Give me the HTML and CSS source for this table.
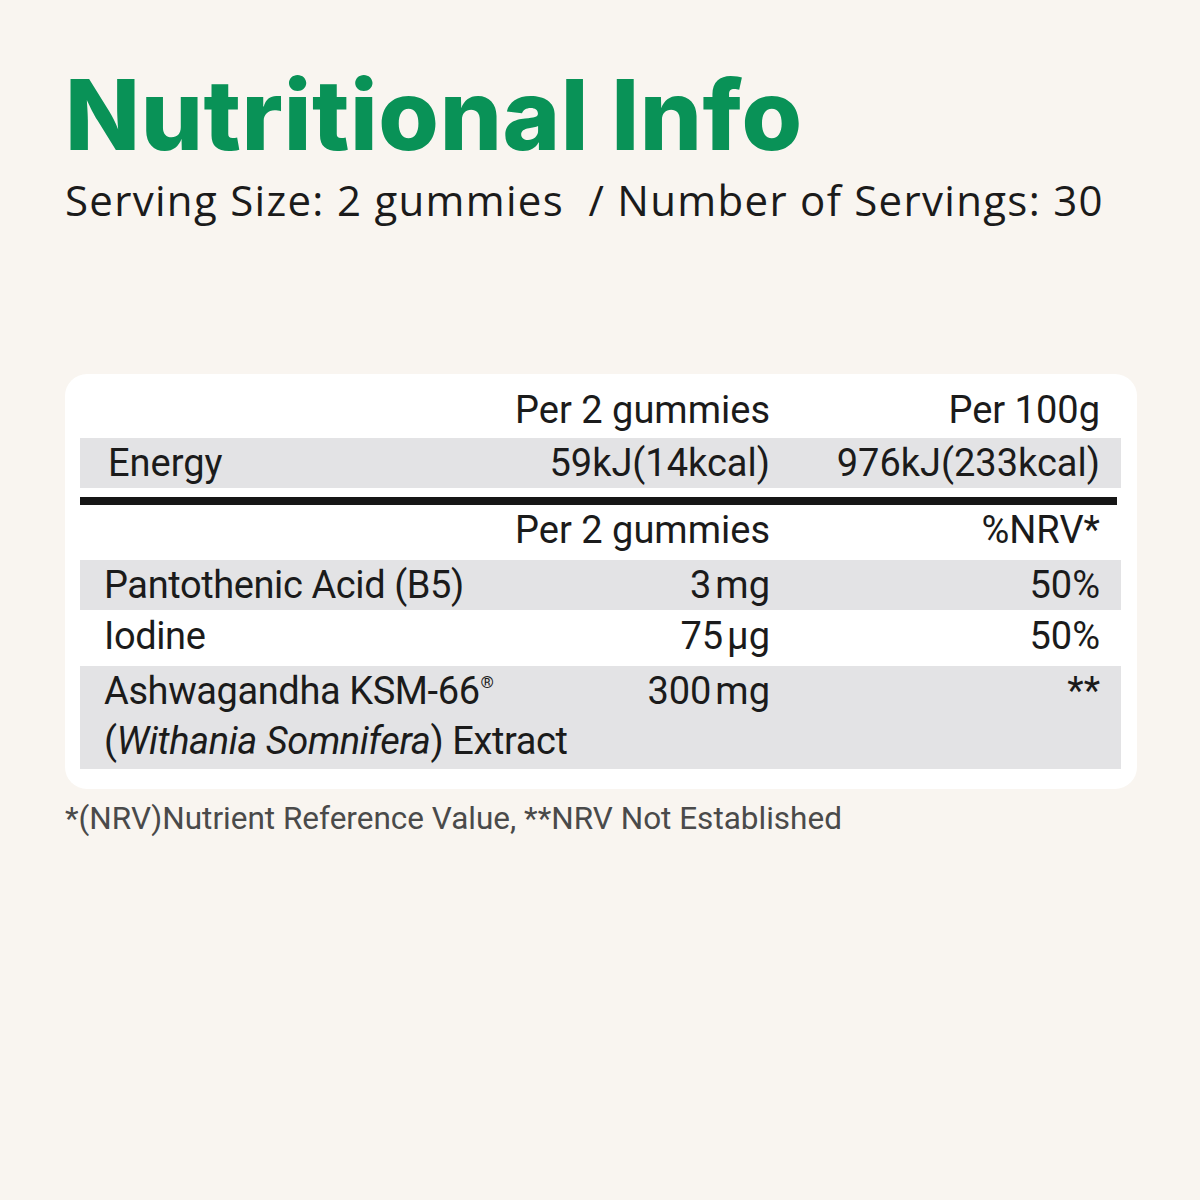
FILE: index.html
```html
<!DOCTYPE html>
<html lang="en">
<head>
<meta charset="utf-8">
<title>Nutritional Info</title>
<link rel="stylesheet" href="styles.css">
</head>
<body>
<main class="page">
  <h1 class="title">Nutritional Info</h1>
  <p class="serving">Serving Size: 2 gummies &nbsp;/ Number of Servings: 30</p>

  <section class="card">
    <div class="row head-top">
      <span class="name"></span>
      <span class="val">Per 2 gummies</span>
      <span class="val">Per 100g</span>
    </div>
    <div class="row shade energy">
      <span class="name indent">Energy</span>
      <span class="val">59kJ(14kcal)</span>
      <span class="val">976kJ(233kcal)</span>
    </div>
    <div class="rule"></div>
    <div class="row head-second">
      <span class="name"></span>
      <span class="val">Per 2 gummies</span>
      <span class="val">%NRV*</span>
    </div>
    <div class="row shade">
      <span class="name">Pantothenic Acid (B5)</span>
      <span class="val">3&#8202;mg</span>
      <span class="val">50%</span>
    </div>
    <div class="row iodine">
      <span class="name">Iodine</span>
      <span class="val">75&#8202;µg</span>
      <span class="val">50%</span>
    </div>
    <div class="row shade tall">
      <span class="name">Ashwagandha KSM-66<sup class="reg">®</sup><br>(<em>Withania Somnifera</em>) Extract</span>
      <span class="val">300&#8202;mg</span>
      <span class="val">**</span>
    </div>
  </section>

  <p class="footnote">*(NRV)Nutrient Reference Value, **NRV Not Established</p>
</main>
</body>
</html>
```

FILE: styles.css
```css
html, body {
  margin: 0;
  padding: 0;
}

body {
  background: #f9f5f0;
  width: 1200px;
  height: 1200px;
  overflow: hidden;
  font-family: Roboto, "Liberation Sans", sans-serif;
  color: #1b1b1b;
}

.page {
  padding: 0 63px 0 65px;
}

.title {
  margin: 0;
  padding-top: 60px;
  font-family: Inter, "Liberation Sans", sans-serif;
  font-weight: 800;
  font-size: 98px;
  line-height: 110px;
  letter-spacing: 0.6px;
  color: #099257;
}

.serving {
  margin: 0;
  padding-top: 5px;
  font-family: "Open Sans", sans-serif;
  font-size: 42px;
  line-height: 50px;
  letter-spacing: 1.3px;
  color: #1b1b1b;
}

.card {
  margin-top: 149px;
  width: 1072px;
  box-sizing: border-box;
  background: #ffffff;
  border-radius: 22px;
  padding: 11px 16px 20px 15px;
}

.row {
  display: grid;
  grid-template-columns: minmax(0, 1fr) 256px 332px;
  padding: 0 21px 0 24px;
  font-size: 38px;
  line-height: 50px;
}

.row .name {
  white-space: nowrap;
  letter-spacing: -0.4px;
}

.row .val {
  text-align: right;
  white-space: nowrap;
}

.shade {
  background: #e3e3e5;
}

.head-top {
  padding-bottom: 3px;
}

.energy .indent {
  padding-left: 4px;
  letter-spacing: 0;
}

.val:nth-child(2) {
  margin-right: -2px;
}

.rule {
  margin-top: 9px;
  margin-right: 4px;
  height: 8px;
  background: #161616;
}

.head-second {
  padding-bottom: 5px;
}

.iodine {
  padding-top: 1px;
  padding-bottom: 5px;
}

.tall {
  padding-bottom: 3px;
}

.reg {
  font-size: 17px;
  line-height: 0;
  vertical-align: 16px;
  margin-left: 1px;
}

.footnote {
  margin: 10px 0 0;
  font-size: 31.5px;
  line-height: 40px;
  color: #4a4a4a;
}
```
